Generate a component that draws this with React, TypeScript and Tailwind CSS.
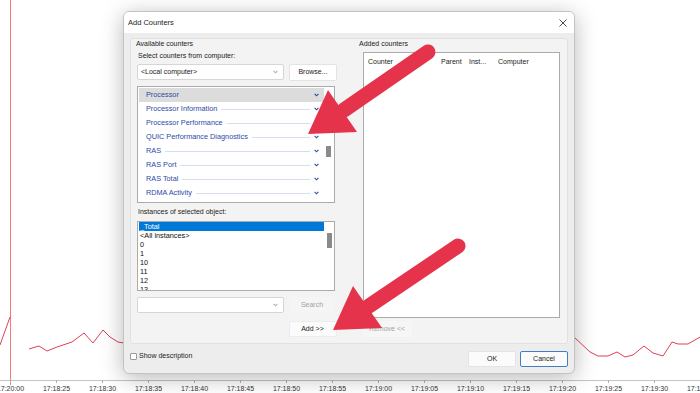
import React from 'react';

const COUNTERS = [
  'Processor',
  'Processor Information',
  'Processor Performance',
  'QUIC Performance Diagnostics',
  'RAS',
  'RAS Port',
  'RAS Total',
  'RDMA Activity',
];

const INSTANCES = ['_Total', '<All instances>', '0', '1', '10', '11', '12', '13'];

const TIMES = [
  '17:20:00', '17:18:25', '17:18:30', '17:18:35', '17:18:40', '17:18:45', '17:18:50', '17:18:55',
  '17:19:00', '17:19:05', '17:19:10', '17:19:15', '17:19:20', '17:19:25', '17:19:30', '17:19:35',
];

const Chevron: React.FC<{ color?: string }> = ({ color = '#2b4aa8' }) => (
  <svg width="5" height="4" viewBox="0 0 5 4" className="shrink-0">
    <path d="M0.6 0.8 L2.5 2.8 L4.4 0.8" fill="none" stroke={color} strokeWidth="1.1" />
  </svg>
);

const Chart: React.FC = () => (
  <svg className="absolute inset-0" width="700" height="393" viewBox="0 0 700 393">
    <line x1="10.5" y1="0" x2="10.5" y2="385" stroke="#f27a7a" strokeWidth="1" />
    <line x1="0" y1="380.5" x2="700" y2="380.5" stroke="#c4c4c4" strokeWidth="1" />
    <polyline points="0,345 10,317" fill="none" stroke="#e0405a" strokeWidth="1" />
    <polyline
      points="29,349 39,346 47,351 57,347 72,342 84,333 93,343 103,330 110,337 118,342 130,344"
      fill="none"
      stroke="#e0405a"
      strokeWidth="1"
    />
    <polyline
      points="574,337 590,352 598,356 608,356 617,352 625,357 633,355 644,346 653,353 663,356 672,342 678,344 688,344 700,337"
      fill="none"
      stroke="#e0405a"
      strokeWidth="1"
    />
    {TIMES.map((t, i) => {
      const x = 10.5 + i * 46;
      return (
        <g key={t}>
          <line x1={x} y1="380" x2={x} y2="383" stroke="#b0b0b0" strokeWidth="1" />
          <text x={x} y="391" fontSize="7" fill="#333" textAnchor="middle" fontFamily="'Liberation Sans', Arial, sans-serif">
            {t}
          </text>
        </g>
      );
    })}
  </svg>
);

const Arrows: React.FC = () => (
  <svg className="absolute inset-0 pointer-events-none" width="700" height="393" viewBox="0 0 700 393">
    <line x1="428" y1="52" x2="344" y2="110" stroke="#e5334b" strokeWidth="15" strokeLinecap="round" />
    <polygon points="308,134 328,90 357,132" fill="#e5334b" />
    <line x1="458" y1="246" x2="369" y2="306" stroke="#e5334b" strokeWidth="15" strokeLinecap="round" />
    <polygon points="333,330 353,286 382,328" fill="#e5334b" />
  </svg>
);

const Combo: React.FC<{ text?: string }> = ({ text }) => (
  <div className="w-[147px] h-[16px] bg-white border border-[#d6d6d6] rounded-[2px] flex items-center pl-[3px] pr-[5px]">
    <span className="flex-1 text-[7px] text-[#222]">{text}</span>
    <Chevron color="#b0b0b0" />
  </div>
);

export default function App() {
  return (
    <div
      className="relative w-[700px] h-[393px] overflow-hidden bg-white text-[#1b1b1b]"
      style={{ fontFamily: "'Liberation Sans', Arial, sans-serif" }}
    >
      <Chart />

      {/* dialog */}
      <div className="absolute left-[123px] top-[11px] w-[452px] h-[363px] flex flex-col bg-[#ededed] border border-[#c3c3c3] rounded-[6px] overflow-hidden shadow-[0_4px_22px_rgba(0,0,0,0.28)]">
        <div className="h-[21px] bg-white flex items-center pl-[4px] pr-[7px]">
          <span className="flex-1 text-[7.5px]">Add Counters</span>
          <svg width="8" height="8" viewBox="0 0 8 8">
            <path d="M0.5 0.5 L7.5 7.5 M7.5 0.5 L0.5 7.5" stroke="#333" strokeWidth="0.9" />
          </svg>
        </div>

        <div className="flex-1 flex flex-col pt-[5px] px-[6px]">
          <div className="h-[306px] bg-[#f3f3f3] border border-[#e0e0e0] rounded-[3px] flex flex-col">
            <div className="flex">
              {/* available counters */}
              <div className="w-[213px] pl-[6px] flex flex-col">
                <div className="h-[9px] leading-[9px] text-[7px] -ml-[1px]">Available counters</div>
                <div className="mt-[3px] h-[9px] leading-[9px] text-[7px] pl-[1px]">Select counters from computer:</div>
                <div className="mt-[4px] flex items-start gap-[5px]">
                  <Combo text="<Local computer>" />
                  <div className="w-[48px] h-[17px] bg-white border border-[#e3e3e3] rounded-[2px] flex items-center justify-center text-[7px]">
                    Browse...
                  </div>
                </div>

                <div className="mt-[5px] w-[198px] h-[117px] bg-white border border-[#ababab] flex overflow-hidden">
                  <div className="flex-1 flex flex-col pt-[1px] pl-[1px]">
                    {COUNTERS.map((c, i) => (
                      <div
                        key={c}
                        className={`h-[14px] flex items-center pl-[7px] pr-[5px] text-[7.3px] text-[#2b4aa8] ${i === 0 ? 'bg-[#dcdcdc]' : ''}`}
                      >
                        <span className="whitespace-nowrap">{c}</span>
                        <span className={`flex-1 h-[1px] mx-[4px] ${i === 0 ? '' : 'bg-[#d6deee]'}`} />
                        <Chevron />
                      </div>
                    ))}
                  </div>
                  <div className="w-[10px] pt-[59px] pl-[2px]">
                    <div className="w-[5px] h-[11px] bg-[#8a8a8a]" />
                  </div>
                </div>

                <div className="mt-[4px] h-[9px] leading-[9px] text-[7px] pl-[1px]">Instances of selected object:</div>

                <div className="mt-[5px] w-[198px] h-[70px] bg-white border border-[#ababab] flex overflow-hidden">
                  <div className="flex-1 flex flex-col pl-[1px]">
                    {INSTANCES.map((n, i) => (
                      <div
                        key={n}
                        className={`h-[9px] shrink-0 leading-[9px] pl-[1px] text-[7.3px] whitespace-nowrap ${i === 0 ? 'bg-[#0078d7] text-white' : 'text-[#111]'}`}
                      >
                        {n}
                      </div>
                    ))}
                  </div>
                  <div className="w-[10px] pt-[11px] pl-[3px]">
                    <div className="w-[5px] h-[15px] bg-[#8a8a8a]" />
                  </div>
                </div>

                <div className="mt-[6px] flex items-start gap-[5px]">
                  <Combo />
                  <div className="w-[46px] h-[16px] bg-[#f5f5f5] rounded-[2px] flex items-center justify-center text-[7px] text-[#a3a3a3]">
                    Search
                  </div>
                </div>
              </div>

              {/* added counters */}
              <div className="flex-1 pl-[15px] pr-[7px] flex flex-col">
                <div className="h-[9px] leading-[9px] text-[7px]">Added counters</div>
                <div className="mt-[4px] ml-[4px] h-[266px] bg-white border border-[#ababab] relative">
                  <div className="flex items-center h-[18px] pt-[1px] text-[7px]">
                    <span className="w-[77px] pl-[4px]">Counter</span>
                    <span className="w-[28px]">Parent</span>
                    <span className="w-[29px]">Inst...</span>
                    <span>Computer</span>
                  </div>
                </div>
              </div>
            </div>

            <div className="mt-[3px] flex justify-center gap-[26px] pl-[2px]">
              <div className="w-[48px] h-[16px] bg-[#fbfbfb] border border-[#ececec] rounded-[2px] flex items-center justify-center text-[7px]">
                Add &gt;&gt;
              </div>
              <div className="w-[49px] h-[16px] bg-[#f6f6f6] rounded-[2px] flex items-center justify-center text-[7px] text-[#a3a3a3]">
                Remove &lt;&lt;
              </div>
            </div>
          </div>

          <div className="flex-1 flex items-start pt-[6px]">
            <div className="flex-1 flex items-center gap-[2px] pt-[1px]">
              <div className="w-[7px] h-[7px] bg-white border border-[#9a9a9a] rounded-[1px]" />
              <span className="text-[7px]">Show description</span>
            </div>
            <div className="flex gap-[4px] pt-[1px]">
              <div className="w-[48px] h-[16px] bg-[#fbfbfb] border border-[#e4e4e4] rounded-[2px] flex items-center justify-center text-[7px]">
                OK
              </div>
              <div className="w-[48px] h-[16px] bg-[#fbfbfb] border border-[#3d7fc9] rounded-[2px] flex items-center justify-center text-[7px]">
                Cancel
              </div>
            </div>
          </div>
        </div>
      </div>

      <Arrows />
    </div>
  );
}
